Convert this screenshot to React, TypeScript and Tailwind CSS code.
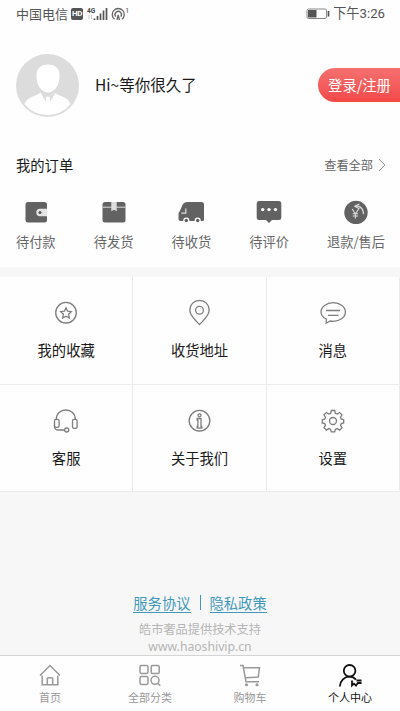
import React from 'react';

interface IItem {
  label: string;
  icon: React.ReactNode;
}

const orders: IItem[] = [
  {
    label: '待付款',
    icon: (
      <svg width="24" height="24" viewBox="0 0 24 24">
        <rect x="1.5" y="2" width="21.5" height="20.5" rx="2.5" fill="#626262" />
        <path d="M23 8.8h-7a3.7 3.7 0 0 0 0 7.4h7z" fill="#e4e4e4" />
        <circle cx="16" cy="12.5" r="1.5" fill="#555" />
      </svg>
    ),
  },
  {
    label: '待发货',
    icon: (
      <svg width="24" height="24" viewBox="0 0 24 24">
        <rect x="0.5" y="2" width="23" height="20.5" rx="2.5" fill="#626262" />
        <path d="M0.5 7.2h23" stroke="#ddd" strokeWidth="1" />
        <path d="M9.3 2h5.4v9.2L12 9.8l-2.7 1.4z" fill="#ddd" />
      </svg>
    ),
  },
  {
    label: '待收货',
    icon: (
      <svg width="26" height="24" viewBox="0 0 26 24">
        <path
          d="M9.5 2h14A2.5 2.5 0 0 1 26 4.500v15a1.500 1.500 0 0 1-1.500 1.500H2.500A2 2 0 0 1 .500 19v-5q0-1.500 1.300-3L4.500 5Q6 2 9.500 2z"
          fill="#626262"
        />
        <path d="M7.800 8.500v4.700H3.300" fill="none" stroke="#ddd" strokeWidth="1.200" />
        <circle cx="8.300" cy="20.500" r="2.400" fill="#626262" stroke="#fff" strokeWidth="1.300" />
        <circle cx="19.700" cy="20.500" r="2.400" fill="#626262" stroke="#fff" strokeWidth="1.300" />
      </svg>
    ),
  },
  {
    label: '待评价',
    icon: (
      <svg width="26" height="24" viewBox="0 0 26 24">
        <path
          d="M3.200 1h19.600a2.500 2.500 0 0 1 2.500 2.500v14a2.500 2.500 0 0 1-2.500 2.500H16l-3 3-3-3H3.200a2.500 2.500 0 0 1-2.500-2.500v-14A2.500 2.500 0 0 1 3.200 1z"
          fill="#626262"
        />
        <circle cx="6.700" cy="9.600" r="1.700" fill="#fff" />
        <circle cx="13" cy="9.600" r="1.700" fill="#fff" />
        <circle cx="19.500" cy="9.600" r="1.700" fill="#fff" />
      </svg>
    ),
  },
  {
    label: '退款/售后',
    icon: (
      <svg width="24" height="24" viewBox="0 0 24 24">
        <circle cx="12" cy="12.500" r="11.700" fill="#626262" />
        <path
          d="M8.200 9l3.200 5 3.200-5M11.400 14v4.500M8.700 13.700h5.400M8.700 16h5.400"
          fill="none"
          stroke="#ddd"
          strokeWidth="1.100"
        />
        <path d="M15.500 4l-5 2.200h3.500q5.200 1.300 5.600 8" fill="none" stroke="#ddd" strokeWidth="1.200" />
        <path d="M10.500 6.200l5 2.500" stroke="#ddd" strokeWidth="1.200" />
      </svg>
    ),
  },
];

const menus: IItem[] = [
  {
    label: '我的收藏',
    icon: (
      <>
        <circle cx="14" cy="13.700" r="10.300" />
        <path d="M14 8.800l1.600 3.400 3.700.5-2.700 2.600.7 3.700-3.300-1.800-3.300 1.800.7-3.700-2.700-2.600 3.700-.5z" />
      </>
    ),
  },
  {
    label: '收货地址',
    icon: (
      <>
        <path d="M14.500 25.500C10 21 4.800 16.500 4.800 11a9.700 9.700 0 0 1 19.400 0C24.200 16.500 19 21 14.500 25.500z" />
        <circle cx="14.500" cy="11.300" r="3.900" />
      </>
    ),
  },
  {
    label: '消息',
    icon: (
      <>
        <path d="M7.200 24.200l.2-4.200C4 18.500 2 16 2 13c0-5.200 5.400-9.300 12.200-9.300S26.400 7.800 26.400 13 21 22.300 14.200 22.300q-1.500 0-3-.3z" />
        <path d="M7 11.500h14M9 16.300h10.500" />
      </>
    ),
  },
  {
    label: '客服',
    icon: (
      <>
        <path d="M4.300 12.300C4.300 6.500 8.500 3 13.800 3s9.500 3.500 9.500 9.300" />
        <rect x="2.500" y="12.300" width="4.600" height="8" rx="1.600" />
        <rect x="20.500" y="12.300" width="4.600" height="9" rx="1.600" />
        <path d="M2.500 17.500v2q0 3.500 4 3.500h6.200" />
        <circle cx="14.700" cy="23" r="2" />
      </>
    ),
  },
  {
    label: '关于我们',
    icon: (
      <>
        <circle cx="14.500" cy="13.700" r="10.300" />
        <circle cx="14.500" cy="8.300" r="1.500" />
        <path d="M12.200 11.500h3.800v8h.8v1.700h-4.600v-1.700h.7v-6.300h-.7z" />
      </>
    ),
  },
  {
    label: '设置',
    icon: (
      <>
        <path d="M12.300 3.500h3.400l.6 2.700 2 .8 2.300-1.500 2.400 2.400-1.500 2.300.8 2 2.400.5v3.200l-2.400.6-.8 1.900 1.500 2.300-2.400 2.400-2.300-1.500-2 .8-.6 2.400h-3.400l-.6-2.400-2-.8-2.300 1.500L5 20.700l1.500-2.300-.8-1.900-2.400-.6v-3.200l2.400-.5.8-2L5 7.900l2.400-2.400L9.700 7l2-.8z" />
        <circle cx="14" cy="14" r="3.500" />
      </>
    ),
  },
];

const tabs: IItem[] = [
  {
    label: '首页',
    icon: (
      <>
        <path d="M2 12.500L12 2.500l10 10M4.200 12.500v9.300h15.600v-9.300" />
        <path d="M9.300 21.500v-6q0-.8.800-.8h3.800q.8 0 .8.800v6" />
      </>
    ),
  },
  {
    label: '全部分类',
    icon: (
      <>
        <rect x="2" y="2.500" width="8" height="8" rx="1.500" />
        <rect x="13.200" y="2.500" width="8" height="8" rx="1.500" />
        <rect x="2" y="13.500" width="8" height="8" rx="1.500" />
        <circle cx="17" cy="17.300" r="4" />
        <path d="M19.500 20l2.800 2.800" />
      </>
    ),
  },
  {
    label: '购物车',
    icon: (
      <>
        <path d="M2 2.500h3l3 16.200h13M5.800 4.700h15.700l-1.200 9.300-12.800.8" />
        <circle cx="8.500" cy="21.800" r=".8" />
        <circle cx="19" cy="21.800" r=".8" />
      </>
    ),
  },
  {
    label: '个人中心',
    icon: (
      <>
        <circle cx="11.600" cy="7.800" r="5.800" />
        <path d="M1.800 23.500c.5-6 4.500-9.800 9.800-9.800 2.500 0 4.800 1 6.400 3" />
        <path d="M14 17.500v5l2-1.800 2 2 1.800-2.700h3.700M18.500 17.500h5" />
      </>
    ),
  },
];

const StatusBar: React.FC = () => (
  <div className="flex h-7 items-center pl-4 pr-[15px] text-[13px] text-[#555]">
    <span>中国电信</span>
    <span className="ml-[3px] flex h-3 w-3 items-center justify-center rounded-[2px] bg-[#555] font-['Roboto'] text-[8px] font-bold tracking-tighter text-white">
      HD
    </span>
    <svg className="ml-1" width="22" height="14" viewBox="0 0 22 14">
      <text x="0" y="6" fontSize="6.500" fontWeight="bold" fontFamily="Roboto" fill="#444">4G</text>
      <path d="M2 8v4M4.500 8v4" stroke="#ccc" strokeWidth="1" />
      <path d="M7.500 11.500v1.500M10.500 9v4M13.500 6.500v6.500M16.500 3.500v9.500M19.500 1v12" stroke="#555" strokeWidth="1.700" />
    </svg>
    <svg className="ml-[2px]" width="19" height="14" viewBox="0 0 19 14">
      <g fill="none" stroke="#666" strokeWidth="1.300">
        <path d="M3.500 12.200a6 6 0 1 1 7.500 0" />
        <path d="M4.800 9.700a3.200 3.200 0 1 1 4.900 0" />
        <path d="M6 13l1.200-5 1.200 5" />
      </g>
      <text x="14.300" y="6" fontSize="7" fontFamily="Roboto" fill="#555">1</text>
    </svg>
    <svg className="ml-auto" width="24" height="12" viewBox="0 0 24 12">
      <rect x="1" y="1" width="19.500" height="9.500" rx="1.500" fill="none" stroke="#888" />
      <rect x="2" y="2" width="8.500" height="7.500" fill="#555" />
      <path d="M22.500 3v5.500" stroke="#555" strokeWidth="1.700" />
    </svg>
    <span className="ml-[3px] font-['Roboto','Noto_Sans_CJK_SC',sans-serif] text-[13.200px]">下午3:26</span>
  </div>
);

const App: React.FC = () => {
  return (
    <div className="flex h-[711px] w-[400px] flex-col overflow-hidden bg-[#f7f7f7] font-['Noto_Sans_CJK_SC',sans-serif] text-[#1a1a1a]">
      <div className="h-[267px] shrink-0 bg-[#fefefe]">
        <StatusBar />

        <div className="mt-[25px] flex h-16 items-center pl-4">
          <svg width="63" height="63" viewBox="0 0 63 63">
            <circle cx="31.500" cy="31.500" r="31.500" fill="#dcdcdc" />
            <path
              d="M32 10.500c8 0 12 4 11.500 13C43 32 38 38.500 32 38.500S21 32 20.500 23.500C20 14.500 24 10.500 32 10.500z"
              fill="#fff"
            />
            <path
              d="M24.500 38.500q-2.500 2-6.500 3.500-7.500 2.500-9.500 8a29 29 0 0 0 46 0q-2-5.500-9.500-8-4-1.500-6.500-3.500L32 43z"
              fill="#fff"
            />
            {/* collar and tie */}
            <path d="M24.500 38l5 9.500 1-4.500-1-1.500zM39.500 38l-5 9.500-1-4.500 1-1.500z" fill="#dcdcdc" />
            <path d="M25 38.500L32 43l7-4.500-3 6-4-2.500-4 2.500z" fill="#dcdcdc" />
            <path d="M30.500 43h3l1.200 5.500-2.700 2-2.700-2z" fill="#fff" />
          </svg>
          <span className="ml-4 text-[15.500px]">Hi~等你很久了</span>
          <button className="ml-auto h-[34px] w-[82px] rounded-l-full bg-linear-to-b from-[#f57070] to-[#f24848] pl-px text-[14.300px] text-white">
            登录/注册
          </button>
        </div>

        <div className="mt-[37px] flex h-[22px] items-center pl-4 pr-[14px]">
          <h2 className="text-[14.300px]">我的订单</h2>
          <div className="ml-auto flex items-center text-[12.200px] text-[#666]">
            查看全部
            <svg className="ml-[5px]" width="8" height="14" viewBox="0 0 8 14">
              <path d="M1 1l5.800 6L1 13" fill="none" stroke="#888" />
            </svg>
          </div>
        </div>

        <div className="mt-6 flex justify-between pl-4 pr-[15px]">
          {orders.map((item) => (
            <div key={item.label} className="flex flex-col items-center">
              {item.icon}
              <span className="mt-2 text-[13.200px] leading-5 text-[#666]">{item.label}</span>
            </div>
          ))}
        </div>
      </div>

      <div className="mt-[10px] grid shrink-0 grid-cols-3 bg-[#fefefe]">
        {menus.map((item) => (
          <div
            key={item.label}
            className="flex h-[107.500px] flex-col items-center border-b border-r border-[#ececec] pt-[22px]"
          >
            <svg width="28" height="28" viewBox="0 0 28 28" fill="none" stroke="#7d7d7d" strokeWidth="1.300">
              {item.icon}
            </svg>
            <span className="mt-[13px] text-[14.300px] leading-5">{item.label}</span>
          </div>
        ))}
      </div>

      <div className="mt-auto flex flex-col items-center">
        <div className="flex h-[21px] items-center text-[14.300px] leading-5 text-[#4298bb]">
          <a className="border-b border-[#4298bb] leading-[19px]">服务协议</a>
          <span className="mx-[9px] h-[15px] w-px bg-[#4298bb]" />
          <a className="border-b border-[#4298bb] leading-[19px]">隐私政策</a>
        </div>
        <p className="mt-[7px] text-[12.200px] leading-[18px] text-[#b5b5b5]">皓市奢品提供技术支持</p>
        <p className="font-['Noto_Sans'] text-[12.200px] leading-[17px] text-[#b5b5b5]">www.haoshivip.cn</p>
      </div>

      <div className="grid h-14 shrink-0 grid-cols-4 border-t border-[#d4d4d4] bg-[#fefefe]">
        {tabs.map((item, index) => (
          <div
            key={item.label}
            className={`flex flex-col items-center pt-[7px] ${index === 3 ? 'text-[#111]' : 'text-[#999]'}`}
          >
            <svg
              width="24"
              height="25"
              viewBox="0 0 24 25"
              fill="none"
              stroke="currentColor"
              strokeWidth={index === 3 ? 1.8 : 1.5}
            >
              {item.icon}
            </svg>
            <span className="mt-px text-[11px] leading-4">{item.label}</span>
          </div>
        ))}
      </div>
    </div>
  );
};

export default App;
